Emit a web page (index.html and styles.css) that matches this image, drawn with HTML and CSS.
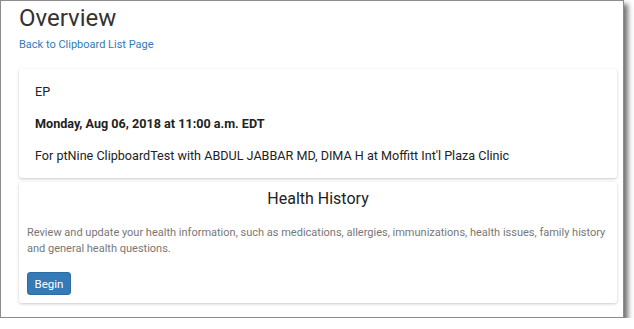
FILE: index.html
```html
<!DOCTYPE html>
<html>
<head>
<meta charset="utf-8">
<link rel="stylesheet" href="styles.css">
</head>
<body>
<div class="window">
  <h1 class="title">Overview</h1>
  <a class="back-link" href="#">Back to Clipboard List Page</a>
  <div class="card appt">
    <p class="appt-line">EP</p>
    <p class="appt-line appt-date">Monday, Aug 06, 2018 at 11:00 a.m. EDT</p>
    <p class="appt-line">For ptNine ClipboardTest with ABDUL JABBAR MD, DIMA H at Moffitt Int'l Plaza Clinic</p>
  </div>
  <div class="card history">
    <h2 class="history-title">Health History</h2>
    <p class="history-text">Review and update your health information, such as medications, allergies, immunizations, health issues, family history and general health questions.</p>
    <button class="btn-begin">Begin</button>
  </div>
</div>
</body>
</html>
```
FILE: styles.css
```css
html, body {
  margin: 0;
  padding: 0;
  background: #ffffff;
}
body {
  font-family: Roboto, "Liberation Sans", sans-serif;
  color: #333;
}
.window {
  box-sizing: border-box;
  width: 624px;
  height: 318px;
  border: 1px solid #8c8c8c;
  background: #fff;
  box-shadow: 4px 4px 5px rgba(0, 0, 0, 0.55);
  padding: 3px 6px 0 17px;
  display: flex;
  flex-direction: column;
}
.title {
  margin: 0 0 5px 1px;
  font-size: 24px;
  line-height: 28px;
  font-weight: 400;
  color: #333;
}
.back-link {
  display: block;
  font-size: 11px;
  line-height: 15px;
  color: #337ab7;
  text-decoration: none;
  margin: 0 0 17px 1px;
}
.card {
  background: #fff;
  border-radius: 3px;
  box-shadow: 0 1px 3px rgba(0, 0, 0, 0.22);
  margin-left: 1px;
}
.appt {
  padding: 14px 16px 14px 16px;
  margin-bottom: 4px;
}
.appt-line {
  margin: 0 0 15px 0;
  font-size: 12.6px;
  line-height: 17px;
  color: #222;
}
.appt-line:last-child {
  margin-bottom: 0;
}
.appt-date {
  font-weight: 700;
}
.history {
  padding: 6px 8px 8px 8px;
}
.history-title {
  margin: 0 0 15px 0;
  text-align: center;
  font-size: 16px;
  line-height: 22px;
  font-weight: 400;
  color: #222;
}
.history-text {
  margin: 0 0 15px 0;
  font-size: 11px;
  line-height: 16px;
  color: #777;
}
.btn-begin {
  display: block;
  box-sizing: border-box;
  width: 44px;
  height: 23px;
  padding: 0;
  font-family: Roboto, "Liberation Sans", sans-serif;
  font-size: 11.5px;
  color: #fff;
  background: #337ab7;
  border: 1px solid #2e6da4;
  border-radius: 3px;
}
```
